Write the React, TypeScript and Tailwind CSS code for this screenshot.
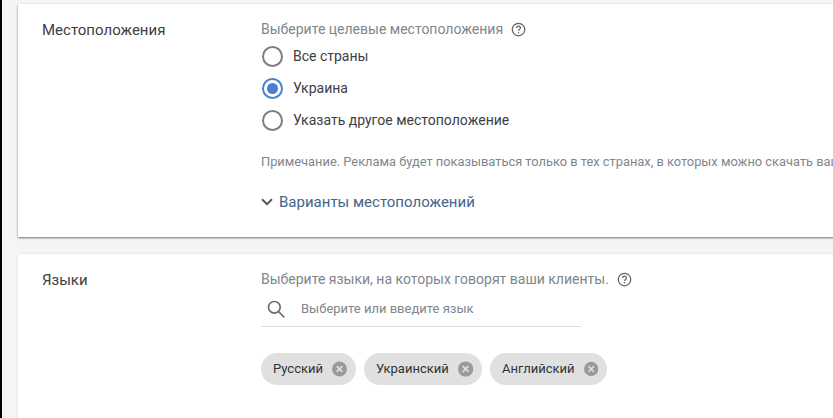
import React from "react";

function Help({ className }: { className: string }) {
  return (
    <svg className={className} width="15" height="15" viewBox="0 0 24 24" fill="none" stroke="#5f6368" strokeWidth="2">
      <circle cx="12" cy="12" r="10" />
      <path d="M9 9.6a3 3 0 0 1 6 0c0 2.2-3 2.4-3 4.6" />
      <path d="M12 16.2v2" />
    </svg>
  );
}

function Radio({ checked, label }: { checked?: boolean; label: string }) {
  return (
    <div className="flex h-8 items-center pl-px">
      <div className={`flex h-[21px] w-[21px] items-center justify-center rounded-full border-2 ${checked ? "border-[#4a7fd0]" : "border-[#7d7d7d]"}`}>
        {checked && <div className="h-[11px] w-[11px] rounded-full bg-[#4a7fd0]" />}
      </div>
      <span className="ml-[10px] text-[14px] text-[#3c4043]">{label}</span>
    </div>
  );
}

function Chip({ label, className }: { label: string; className: string }) {
  return (
    <div className={`flex h-8 items-center rounded-full bg-[#e0e0e0] pl-3 pr-[9px] ${className}`}>
      <span className="text-[13px] text-[#303336]">{label}</span>
      <svg className="ml-[9px]" width="16" height="16" viewBox="0 0 16 16">
        <circle cx="8" cy="8" r="8" fill="#9a9a9a" />
        <path d="M5 5l6 6M11 5l-6 6" stroke="#e0e0e0" strokeWidth="1.8" />
      </svg>
    </div>
  );
}

export default function App() {
  return (
    <div className="h-[418px] w-[833px] overflow-hidden border-l-2 border-black bg-[#f5f5f5] pl-4 pt-1 font-['Roboto',sans-serif]">
      <section className="flex h-[233px] w-[900px] bg-white shadow-[0_1px_2px_rgba(0,0,0,0.55)]">
        <h2 className="ml-6 mt-[17px] w-[219px] shrink-0 text-[15px] leading-[18px] font-normal text-[#3c4043]">Местоположения</h2>
        <div className="min-w-0 flex-1 pt-[16px]">
          <div className="flex h-[18px] items-center text-[14px] text-[#80868b]">
            Выберите целевые местоположения
            <Help className="ml-2" />
          </div>
          <div className="mt-[2px] flex flex-col">
            <Radio label="Все страны" />
            <Radio checked label="Украина" />
            <Radio label="Указать другое местоположение" />
          </div>
          <p className="mt-[18px] whitespace-nowrap text-[12.85px] leading-[16px] text-[#80868b]">
            Примечание. Реклама будет показываться только в тех странах, в которых можно скачать ваше приложение.
          </p>
          <div className="mt-[22px] flex h-5 items-center text-[15px] text-[#44658a]">
            <svg width="12" height="8" viewBox="0 0 12 8" fill="none" stroke="#4a5560" strokeWidth="2">
              <path d="M1 1.2l5 5 5-5" />
            </svg>
            <span className="ml-[6px]">Варианты местоположений</span>
          </div>
        </div>
      </section>
      <section className="mt-[17px] flex h-[200px] w-[900px] bg-white shadow-[0_0_2px_rgba(0,0,0,0.12)]">
        <h2 className="ml-6 mt-[17px] w-[219px] shrink-0 text-[15px] leading-[18px] font-normal text-[#3c4043]">Языки</h2>
        <div className="flex-1 pt-[16px]">
          <div className="flex h-[18px] items-center text-[14px] text-[#80868b]">
            Выберите языки, на которых говорят ваши клиенты.
            <Help className="ml-2" />
          </div>
          <div className="mt-[5px] flex h-[34px] w-[320px] items-center border-b border-[#dadce0] pb-[2px] pl-[5px]">
            <svg width="20" height="20" viewBox="0 0 24 24" fill="none" stroke="#6b6f73" strokeWidth="2">
              <circle cx="10" cy="10" r="7" />
              <path d="M15 15l7 7" />
            </svg>
            <span className="ml-[15px] text-[13px] text-[#80868b]">Выберите или введите язык</span>
          </div>
          <div className="mt-[26px] flex">
            <Chip label="Русский" className="w-[95px]" />
            <Chip label="Украинский" className="ml-2 w-[118px]" />
            <Chip label="Английский" className="ml-2 w-[117px]" />
          </div>
        </div>
      </section>
    </div>
  );
}
